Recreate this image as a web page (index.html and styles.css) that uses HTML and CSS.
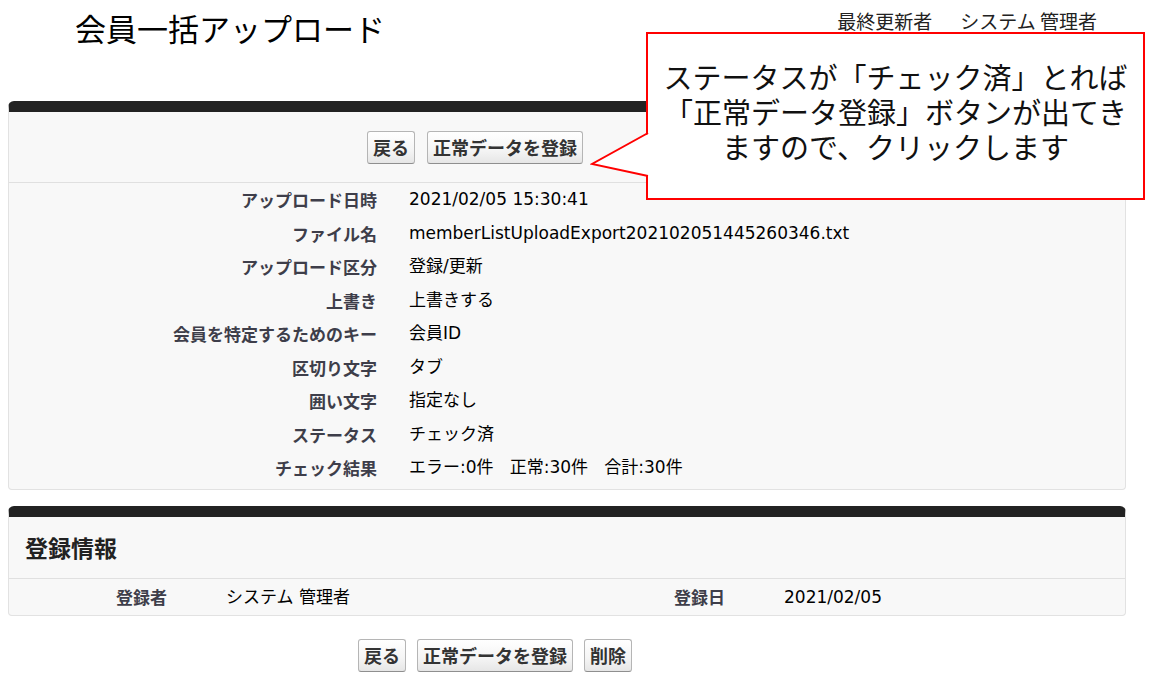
FILE: index.html
```html
<!DOCTYPE html>
<html lang="ja">
<head>
  <meta charset="UTF-8" />
  <title>会員一括アップロード</title>
  <link rel="stylesheet" href="styles.css">
</head>
<body>
  <header class="page-head">
    <h1>会員一括アップロード</h1>
    <div class="modified">
      <span>最終更新者</span>
      <span>システム 管理者</span>
    </div>
  </header>

  <section class="panel">
    <div class="btn-row top-btns">
      <button class="btn">戻る</button>
      <button class="btn">正常データを登録</button>
    </div>
    <div class="detail">
      <div class="lbl">アップロード日時</div><div class="val">2021/02/05 15:30:41</div>
      <div class="lbl">ファイル名</div><div class="val">memberListUploadExport202102051445260346.txt</div>
      <div class="lbl">アップロード区分</div><div class="val">登録/更新</div>
      <div class="lbl">上書き</div><div class="val">上書きする</div>
      <div class="lbl">会員を特定するためのキー</div><div class="val">会員ID</div>
      <div class="lbl">区切り文字</div><div class="val">タブ</div>
      <div class="lbl">囲い文字</div><div class="val">指定なし</div>
      <div class="lbl">ステータス</div><div class="val">チェック済</div>
      <div class="lbl">チェック結果</div><div class="val">エラー:0件&nbsp;&nbsp;&nbsp;正常:30件&nbsp;&nbsp;&nbsp;合計:30件</div>
    </div>
  </section>

  <section class="panel panel-reg">
    <h2>登録情報</h2>
    <div class="reg-row">
      <div class="lbl">登録者</div><div class="val">システム 管理者</div>
      <div class="lbl">登録日</div><div class="val">2021/02/05</div>
    </div>
  </section>

  <div class="btn-row bottom-btns">
    <button class="btn">戻る</button>
    <button class="btn">正常データを登録</button>
    <button class="btn">削除</button>
  </div>

  <div class="callout">
    <svg class="tail" width="62" height="52" viewBox="0 0 62 52">
      <polygon points="60,4 2,35 60,47" fill="#fff" />
      <polyline points="58,4 2,35 58,47" fill="none" stroke="#f00" stroke-width="2" />
    </svg>
    <div class="note">
      <div>ステータスが「チェック済」とれば</div>
      <div>「正常データ登録」ボタンが出てき</div>
      <div>ますので、クリックします</div>
    </div>
  </div>
</body>
</html>
```

FILE: styles.css
```css
body {
  margin: 8px 8px 0;
  position: relative;
  font-family: 'DejaVu Sans', 'Noto Sans CJK JP', sans-serif;
  font-size: 17px;
  color: #000;
  background: #fff;
}
.page-head {
  display: flex;
  justify-content: space-between;
  height: 93px;
}
.page-head h1 {
  margin: 0 0 0 67px;
  font-family: 'Noto Sans CJK JP', sans-serif;
  font-weight: normal;
  font-size: 31px;
  line-height: 40px;
}
.modified {
  display: flex;
  gap: 28px;
  margin: 0 48px 0 0;
  font-family: 'Noto Sans CJK JP', sans-serif;
  font-size: 19px;
  line-height: 26px;
  color: #222;
}
.panel {
  margin-right: 19px;
  background: #f8f8f8;
  border: 1px solid #e2e2e2;
  border-top: 11px solid #222;
  border-radius: 6px 6px 4px 4px;
}
.btn-row {
  display: flex;
  gap: 12px;
  align-items: center;
}
.top-btns {
  height: 70px;
  padding-left: 358px;
  border-bottom: 1px solid #e0e0e0;
}
.btn {
  height: 33px;
  padding: 0 5px;
  font-family: 'Noto Sans CJK JP', sans-serif;
  font-size: 18px;
  font-weight: bold;
  color: #333;
  background: linear-gradient(#fff, #f4f4f4 60%, #e6e6e6);
  border: 1px solid #b5b5b5;
  border-bottom-color: #8f8f8f;
  border-radius: 3px;
}
.detail {
  display: grid;
  grid-template-columns: 368px 1fr;
  line-height: 33.5px;
  padding-bottom: 4px;
}
.lbl {
  text-align: right;
  font-family: 'Noto Sans CJK JP', sans-serif;
  font-weight: bold;
  color: #3e3e4a;
}
.val {
  padding-left: 32px;
  white-space: nowrap;
}
.panel-reg {
  margin-top: 16px;
}
.panel-reg h2 {
  margin: 0;
  padding-left: 16px;
  height: 61px;
  line-height: 61px;
  font-family: 'Noto Sans CJK JP', sans-serif;
  font-size: 23px;
  font-weight: bold;
  color: #222;
  border-bottom: 1px solid #e0e0e0;
}
.reg-row {
  display: grid;
  grid-template-columns: 158px 400px 158px 1fr;
  line-height: 36px;
}
.reg-row .val {
  padding-left: 59px;
}
.bottom-btns {
  margin-top: 23px;
  padding-left: 350px;
  gap: 11px;
}
.callout {
  position: absolute;
  left: 638px;
  top: 24px;
  box-sizing: border-box;
  width: 499px;
  height: 168px;
  background: #fff;
  border: 2px solid #f00;
}
.callout .tail {
  position: absolute;
  left: -58px;
  top: 95px;
}
.note {
  padding-top: 25px;
  text-align: center;
  font-family: 'Noto Sans CJK JP', sans-serif;
  font-size: 29px;
  line-height: 35px;
  color: #111;
}
.note div {
  height: 35px;
  white-space: nowrap;
}
```
